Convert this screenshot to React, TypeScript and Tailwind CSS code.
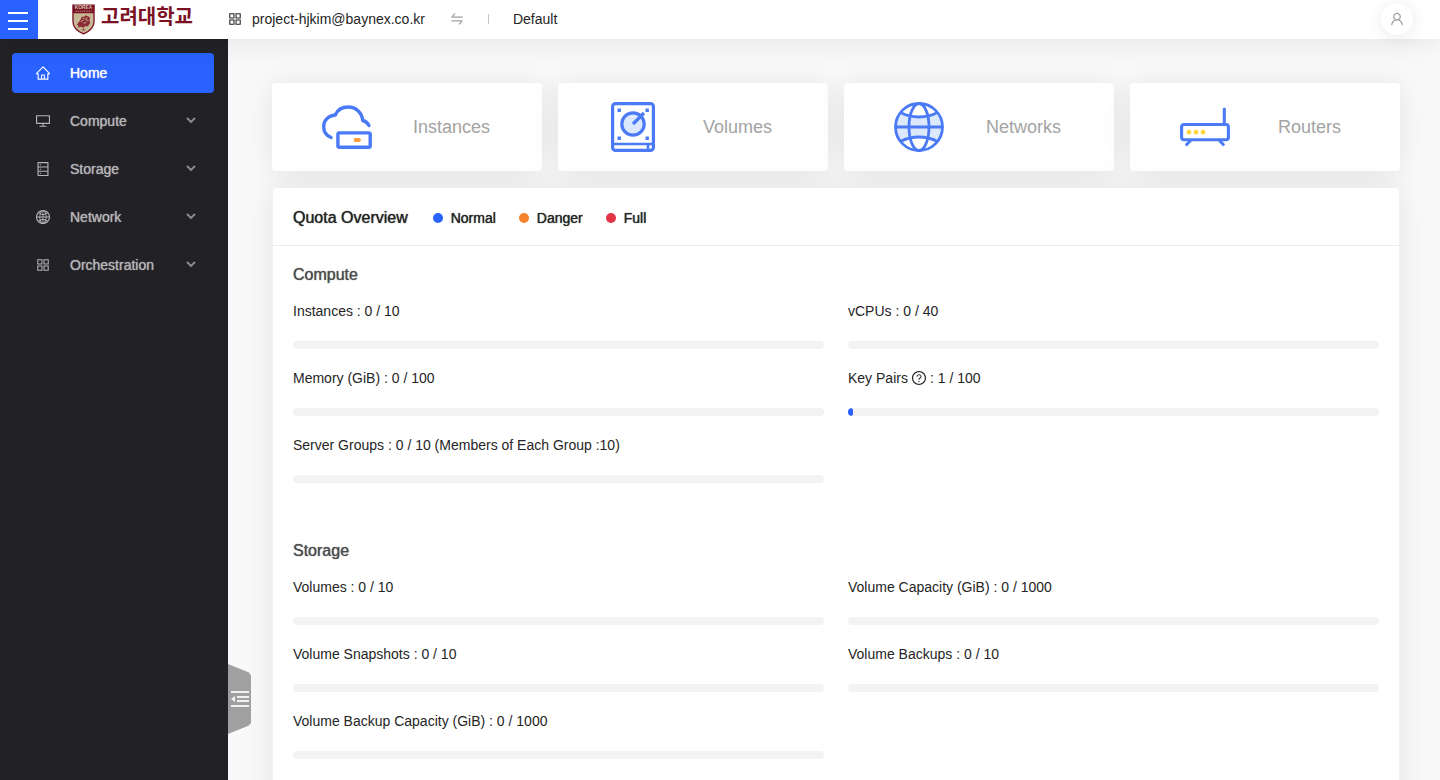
import type { ReactNode } from "react";
import {
  AiOutlineAppstore,
  AiOutlineDatabase,
  AiOutlineDesktop,
  AiOutlineGlobal,
  AiOutlineHome,
  AiOutlineQuestionCircle,
  AiOutlineSwap,
  AiOutlineUser,
} from "react-icons/ai";

type Quota = {
  name: string;
  used: number;
  limit: number;
  suffix?: string;
  help?: boolean;
};

const MENU = [
  { label: "Compute", icon: <AiOutlineDesktop size={16} /> },
  { label: "Storage", icon: <AiOutlineDatabase size={16} /> },
  { label: "Network", icon: <AiOutlineGlobal size={16} /> },
  { label: "Orchestration", icon: <AiOutlineAppstore size={16} /> },
];

const COMPUTE: Quota[] = [
  { name: "Instances", used: 0, limit: 10 },
  { name: "vCPUs", used: 0, limit: 40 },
  { name: "Memory (GiB)", used: 0, limit: 100 },
  { name: "Key Pairs", used: 1, limit: 100, help: true },
  { name: "Server Groups", used: 0, limit: 10, suffix: "(Members of Each Group :10)" },
];

const STORAGE: Quota[] = [
  { name: "Volumes", used: 0, limit: 10 },
  { name: "Volume Capacity (GiB)", used: 0, limit: 1000 },
  { name: "Volume Snapshots", used: 0, limit: 10 },
  { name: "Volume Backups", used: 0, limit: 10 },
  { name: "Volume Backup Capacity (GiB)", used: 0, limit: 1000 },
];

function Crest() {
  return (
    <svg width="23" height="31" viewBox="0 0 24 32" aria-hidden="true">
      <path d="M1 1h22v17c0 6-4 10-11 13C5 28 1 24 1 18z" fill="#c9b896" stroke="#7b1224" strokeWidth="1.4" />
      <path d="M1 1h22v8.500H1z" fill="#7b1224" />
      <text x="12" y="5.500" fontSize="5" fontWeight="700" fill="#d9c7b4" textAnchor="middle">
        KOREA
      </text>
      <path d="M3.500 7.300h17" stroke="#b98f88" strokeWidth="1" strokeDasharray="1.500 .8" />
      <path
        d="M7 19l2-3 1-3 3 0 1-1.500 3 1 2 2-1 2 1 3-2 3-2 1-1-1-2 2-3-1-3 1 1-2-2-1z"
        fill="#8b2b35"
      />
      <path d="M11 14.500l2 1M16 13.500l-2 2.500 3 1M9 18l3-1M12 20l3-1" stroke="#c9b896" strokeWidth="0.900" fill="none" />
      <path d="M10 26c1 2 3 2 4 0M12 25v3" stroke="#9a5a55" strokeWidth="1" fill="none" />
    </svg>
  );
}

function InstanceIcon() {
  return (
    <svg width="50" height="50" viewBox="0 0 50 50" fill="none" stroke="#4a7af5" strokeWidth="3.400" strokeLinecap="round" strokeLinejoin="round" aria-hidden="true">
      <path d="M9 35.500C4 33.500 1.700 29.500 1.700 24.500c0-6.200 4.600-11 11.600-11.500C15.400 8 20 5 26.200 5c7.600 0 13.600 5.500 14.600 13.500 3 .8 5 2.800 6.200 5" />
      <rect x="15.900" y="30.900" width="32.300" height="14.400" rx="1.500" />
      <path d="M33.500 38h3.500" stroke="#fa9d3b" strokeWidth="3.800" />
    </svg>
  );
}

function VolumeIcon() {
  return (
    <svg width="50" height="50" viewBox="0 0 50 50" fill="none" stroke="#4a7af5" strokeWidth="3.200" aria-hidden="true">
      <rect x="4.600" y="1.600" width="40.800" height="46.800" rx="3" />
      <circle cx="25" cy="22" r="11.200" fill="#dce9fd" />
      <path d="M25 22l11-11" strokeLinecap="butt" />
      <path d="M4.500 42h41" strokeWidth="2.600" />
      <path d="M40 42v6" strokeWidth="2.600" />
      <path d="M9.500 8.300h3.400M37.500 8.300h3.400M9.500 36.300h3.400M37.500 36.300h3.400" strokeWidth="3.400" />
    </svg>
  );
}

function NetworkIcon() {
  return (
    <svg width="50" height="50" viewBox="0 0 50 50" fill="none" stroke="#4a7af5" strokeWidth="2.800" aria-hidden="true">
      <path d="M6.500 10.500C18 16.500 32 16.500 43.500 10.500c6.500 8.500 6.500 20 0 28.500-11.500-6-25.500-6-37 0-6.500-8.500-6.500-20 0-28.500z" fill="#dce9fd" stroke="none" />
      <circle cx="25" cy="25" r="23.500" />
      <ellipse cx="25" cy="25" rx="10" ry="23.500" />
      <path d="M1.500 25h47M6.500 10.500C18 16.500 32 16.500 43.500 10.500M6.500 39.500C18 33.500 32 33.500 43.500 39.500" />
    </svg>
  );
}

function RouterIcon() {
  return (
    <svg width="50" height="50" viewBox="0 0 50 50" fill="none" stroke="#4a7af5" strokeWidth="3.100" strokeLinecap="round" aria-hidden="true">
      <rect x="1.600" y="22.500" width="46.800" height="15.300" rx="2.500" />
      <path d="M44.300 7V22" />
      <path d="M10.500 38.500l-3.800 4M39.500 38.500l3.800 4" />
      <g fill="#fadb3f" stroke="none">
        <circle cx="9" cy="30.200" r="2.400" />
        <circle cx="16" cy="30.200" r="2.400" />
        <circle cx="23" cy="30.200" r="2.400" />
      </g>
    </svg>
  );
}

const SHORTCUTS: { label: string; icon: ReactNode }[] = [
  { label: "Instances", icon: <InstanceIcon /> },
  { label: "Volumes", icon: <VolumeIcon /> },
  { label: "Networks", icon: <NetworkIcon /> },
  { label: "Routers", icon: <RouterIcon /> },
];

function QuotaItem({ quota }: { quota: Quota }) {
  const percent = (quota.used / quota.limit) * 100;
  return (
    <div className="pb-[18px]">
      <p className="flex h-[22px] items-center gap-[3px] text-sm whitespace-nowrap">
        {quota.help ? (
          <>
            {quota.name}
            <AiOutlineQuestionCircle size={16} />
            {`: ${quota.used} / ${quota.limit}`}
          </>
        ) : (
          `${quota.name} : ${quota.used} / ${quota.limit} ${quota.suffix ?? ""}`
        )}
      </p>
      <div
        role="progressbar"
        aria-label={quota.name}
        aria-valuenow={percent}
        className="mt-[19px] h-2 overflow-hidden rounded-full bg-[#f3f3f3]"
      >
        <div className="h-full rounded-full bg-[#2962ff]" style={{ width: `${percent}%` }} />
      </div>
    </div>
  );
}

function QuotaSection({ title, items }: { title: string; items: Quota[] }) {
  return (
    <section className="px-5 pb-[38px]">
      <h3 className="mb-[13px] text-base leading-6 font-medium text-[#4d4d4d] [text-shadow:0_0_1px_currentColor]">{title}</h3>
      <div className="grid grid-cols-2 gap-x-6">
        {items.map((q) => (
          <QuotaItem key={q.name} quota={q} />
        ))}
      </div>
    </section>
  );
}

function Legend({ color, label }: { color: string; label: string }) {
  return (
    <li className="flex items-center gap-2">
      <span className={`size-[10px] rounded-full ${color}`} />
      {label}
    </li>
  );
}

export default function App() {
  return (
    <div className="flex h-screen flex-col overflow-hidden bg-[#f9f9f9] font-['Helvetica_Neue','Liberation_Sans','Noto_Sans_CJK_KR',sans-serif] text-sm text-[#252525]">
      <header className="relative z-10 flex h-[39px] shrink-0 items-center bg-white shadow-[0_2px_30px_rgba(0,0,0,0.09)]">
        <div className="flex h-full w-[227px] shrink-0 items-center">
          <button type="button" aria-label="Toggle menu" className="flex h-full w-[38px] flex-col justify-center gap-[6px] bg-[#2962ff] pt-[3px] pl-2">
            <span className="h-[2px] w-5 bg-white" />
            <span className="h-[2px] w-5 bg-white" />
            <span className="h-[2px] w-5 bg-white" />
          </button>
          <a href="#" className="ml-[34px] flex items-center gap-[6px]">
            <Crest />
            <span className="pb-2 font-['Noto_Sans_CJK_KR',sans-serif] text-xl leading-6 font-bold whitespace-nowrap text-[#7b1224]">
              고려대학교
            </span>
          </a>
        </div>
        <div className="flex flex-1 items-center pb-[2px]">
          <AiOutlineAppstore size={16} />
          <span className="ml-[9px]">project-hjkim@baynex.co.kr</span>
          <button type="button" aria-label="Switch project" className="ml-6 text-[#a0a0a0]">
            <AiOutlineSwap size={16} />
          </button>
          <span className="mr-6 ml-[23px] h-[10px] w-px bg-[#c4c4c4]" />
          <span>Default</span>
          <button
            type="button"
            aria-label="Account"
            className="mr-[27px] ml-auto flex size-8 items-center justify-center rounded-full bg-white text-[#a0a0a0] shadow-[0_2px_16px_rgba(0,0,0,0.09)]"
          >
            <AiOutlineUser size={16} />
          </button>
        </div>
      </header>

      <div className="flex min-h-0 flex-1">
        <aside className="relative w-[228px] shrink-0 bg-[#222126] pt-[14px] pr-[14px] pl-3">
          <nav className="flex flex-col gap-2">
            <a href="#" className="flex h-10 items-center gap-[19px] rounded-[4px] bg-[#2962ff] px-[23px] text-white [text-shadow:0_0_1px_currentColor]">
              <AiOutlineHome size={16} />
              Home
            </a>
            {MENU.map((item) => (
              <button key={item.label} type="button" className="flex h-10 items-center gap-[19px] pr-[18px] pl-[23px] text-left text-[#b5b5b6] [text-shadow:0_0_1px_currentColor]">
                {item.icon}
                <span>{item.label}</span>
                <svg className="mb-[2px] ml-auto" width="10" height="8" viewBox="0 0 10 8" fill="none" stroke="#8e8e91" strokeWidth="1.900" aria-hidden="true">
                  <path d="M1 2l4 4 4-4" />
                </svg>
              </button>
            ))}
          </nav>
          <button
            type="button"
            aria-label="Collapse menu"
            className="absolute bottom-[46px] left-full z-10 flex h-[70px] w-[23px] items-center justify-center bg-[#a0a0a0] [clip-path:polygon(0_0,91%_12%,100%_16%,100%_84%,91%_88%,0_100%)]"
          >
            <svg width="18" height="16" viewBox="0 0 18 16" fill="#f2f2f2" aria-hidden="true">
              <path d="M0 0h18v2H0zM6 5h12v2H6zM6 9h12v2H6zM0 14h18v2H0zM0 8l4-3v6z" />
            </svg>
          </button>
        </aside>

        <main className="min-w-0 flex-1 overflow-y-auto pt-11 pr-10 pb-6 pl-11 [scrollbar-width:none]">
          <div className="grid grid-cols-4 gap-4">
            {SHORTCUTS.map((s) => (
              <a
                key={s.label}
                href="#"
                className="grid h-[88px] grid-cols-2 place-items-center rounded-[4px] bg-white pr-[38px] pl-[22px] text-lg text-[#a3a3a3] shadow-[0_2px_30px_rgba(0,0,0,0.09)]"
              >
                {s.icon}
                {s.label}
              </a>
            ))}
          </div>

          <div className="relative mt-4 rounded-[4px] border border-[#f0f0f0] bg-white shadow-[0_2px_30px_rgba(0,0,0,0.09)]">
            <div className="mb-[17px] flex h-[58px] items-center border-b border-[#ebebeb] px-5 pt-[2px] [text-shadow:0_0_1px_currentColor]">
              <h2 className="text-base font-medium">Quota Overview</h2>
              <ul className="ml-[25px] flex gap-[23px] pt-px font-medium">
                <Legend color="bg-[#2962ff]" label="Normal" />
                <Legend color="bg-[#f5832b]" label="Danger" />
                <Legend color="bg-[#e13447]" label="Full" />
              </ul>
            </div>
            <QuotaSection title="Compute" items={COMPUTE} />
            <QuotaSection title="Storage" items={STORAGE} />
          </div>
        </main>
      </div>
    </div>
  );
}
